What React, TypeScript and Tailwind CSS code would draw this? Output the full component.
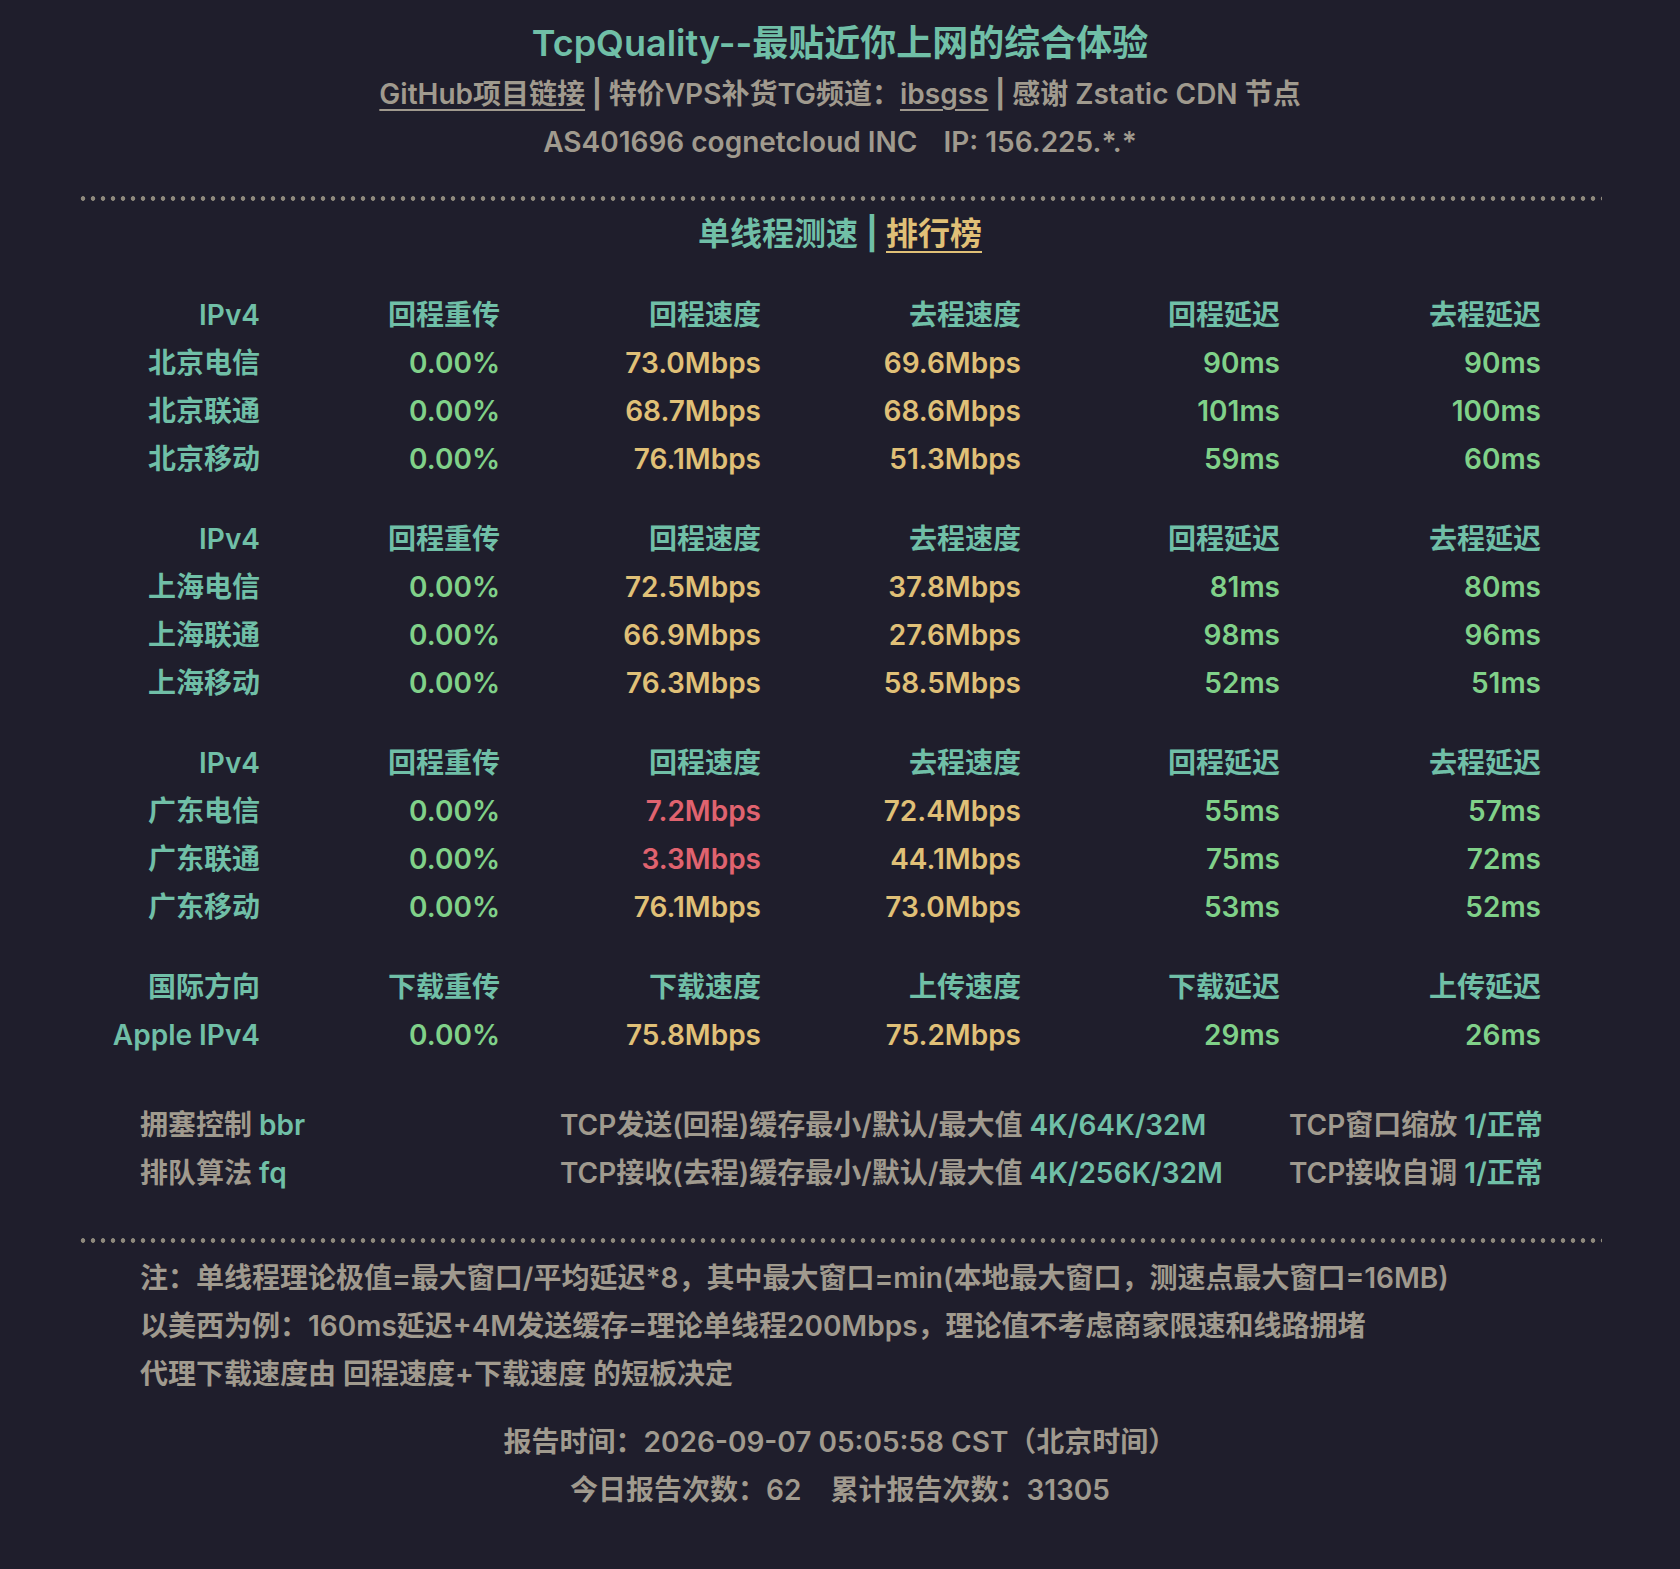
import React from "react";

type Row = {
  name: string;
  retrans: string;
  back: string;
  go: string;
  backRtt: string;
  goRtt: string;
};

type Group = { head: string[]; rows: Row[] };

const groups: Group[] = [
  {
    head: ["IPv4", "回程重传", "回程速度", "去程速度", "回程延迟", "去程延迟"],
    rows: [
      { name: "北京电信", retrans: "0.00%", back: "73.0Mbps", go: "69.6Mbps", backRtt: "90ms", goRtt: "90ms" },
      { name: "北京联通", retrans: "0.00%", back: "68.7Mbps", go: "68.6Mbps", backRtt: "101ms", goRtt: "100ms" },
      { name: "北京移动", retrans: "0.00%", back: "76.1Mbps", go: "51.3Mbps", backRtt: "59ms", goRtt: "60ms" },
    ],
  },
  {
    head: ["IPv4", "回程重传", "回程速度", "去程速度", "回程延迟", "去程延迟"],
    rows: [
      { name: "上海电信", retrans: "0.00%", back: "72.5Mbps", go: "37.8Mbps", backRtt: "81ms", goRtt: "80ms" },
      { name: "上海联通", retrans: "0.00%", back: "66.9Mbps", go: "27.6Mbps", backRtt: "98ms", goRtt: "96ms" },
      { name: "上海移动", retrans: "0.00%", back: "76.3Mbps", go: "58.5Mbps", backRtt: "52ms", goRtt: "51ms" },
    ],
  },
  {
    head: ["IPv4", "回程重传", "回程速度", "去程速度", "回程延迟", "去程延迟"],
    rows: [
      { name: "广东电信", retrans: "0.00%", back: "7.2Mbps", go: "72.4Mbps", backRtt: "55ms", goRtt: "57ms" },
      { name: "广东联通", retrans: "0.00%", back: "3.3Mbps", go: "44.1Mbps", backRtt: "75ms", goRtt: "72ms" },
      { name: "广东移动", retrans: "0.00%", back: "76.1Mbps", go: "73.0Mbps", backRtt: "53ms", goRtt: "52ms" },
    ],
  },
  {
    head: ["国际方向", "下载重传", "下载速度", "上传速度", "下载延迟", "上传延迟"],
    rows: [
      { name: "Apple IPv4", retrans: "0.00%", back: "75.8Mbps", go: "75.2Mbps", backRtt: "29ms", goRtt: "26ms" },
    ],
  },
];

// slow links (< 10Mbps) are shown in red
const speedColor = (v: string) =>
  parseFloat(v) < 10 ? "text-[#e0636f]" : "text-[#e0c077]";

function Dots() {
  return (
    <div className="h-[5px] bg-[radial-gradient(circle,#8d887c_2px,transparent_2.6px)] bg-[length:10px_5px]" />
  );
}

function Cell({ children, className = "" }: { children: React.ReactNode; className?: string }) {
  return <div className={`text-right whitespace-nowrap ${className}`}>{children}</div>;
}

function SpeedTable() {
  return (
    <div className="mt-[33px] ml-[2px] flex flex-col gap-[32px]">
      {groups.map((g, gi) => (
        <div
          key={gi}
          className="grid grid-cols-[180px_240px_261px_260px_259px_261px] leading-[48px]"
        >
          {g.head.map((h) => (
            <Cell key={h} className="text-[#70bfa7]">
              {h}
            </Cell>
          ))}
          {g.rows.map((r) => (
            <React.Fragment key={r.name}>
              <Cell className="text-[#70bfa7]">{r.name}</Cell>
              <Cell className="text-[#80d189]">{r.retrans}</Cell>
              <Cell className={speedColor(r.back)}>{r.back}</Cell>
              <Cell className={speedColor(r.go)}>{r.go}</Cell>
              <Cell className="text-[#80d189]">{r.backRtt}</Cell>
              <Cell className="text-[#80d189]">{r.goRtt}</Cell>
            </React.Fragment>
          ))}
        </div>
      ))}
    </div>
  );
}

export default function App() {
  return (
    <div className="min-h-screen bg-[#1f1e2c] font-['Inter','Noto_Sans_CJK_SC',sans-serif] text-[28px] font-semibold text-[#a09a8e]">
      <div className="mx-auto w-[1524px] pt-[19px]">
        {/* Header */}
        <div className="flex flex-col items-center">
          <h1 className="text-[36px] leading-[48px] font-semibold text-[#70bfa7]">
            TcpQuality--最贴近你上网的综合体验
          </h1>
          <p className="mt-[3px] leading-[48px] whitespace-nowrap">
            <span className="underline decoration-2 underline-offset-[5px]">GitHub项目链接</span>
            <span className="font-bold"> | </span>
            特价VPS补货TG频道：
            <span className="underline decoration-2 underline-offset-[5px]">ibsgss</span>
            <span className="font-bold"> | </span>
            感谢 Zstatic CDN 节点
          </p>
          <p className="leading-[48px] whitespace-nowrap">
            AS401696 cognetcloud INC<span className="ml-[26px]">IP: 156.225.*.*</span>
          </p>
        </div>

        <div className="mt-[30px]">
          <Dots />
        </div>

        <div className="mt-[9px] text-center text-[32px] leading-[48px] text-[#70bfa7]">
          单线程测速 <span className="font-bold">|</span>{" "}
          <span className="text-[#e0c077] underline decoration-2 underline-offset-[6px]">排行榜</span>
        </div>

        <SpeedTable />

        {/* System config */}
        <div className="mt-[42px] grid grid-cols-[420px_729px_auto] pl-[62px] leading-[48px] whitespace-nowrap">
          <div>
            拥塞控制 <span className="text-[#70bfa7]">bbr</span>
          </div>
          <div>
            TCP发送(回程)缓存最小/默认/最大值 <span className="text-[#70bfa7]">4K/64K/32M</span>
          </div>
          <div>
            TCP窗口缩放 <span className="text-[#70bfa7]">1/正常</span>
          </div>
          <div>
            排队算法 <span className="text-[#70bfa7]">fq</span>
          </div>
          <div>
            TCP接收(去程)缓存最小/默认/最大值 <span className="text-[#70bfa7]">4K/256K/32M</span>
          </div>
          <div>
            TCP接收自调 <span className="text-[#70bfa7]">1/正常</span>
          </div>
        </div>

        <div className="mt-[41px]">
          <Dots />
        </div>

        {/* Notes */}
        <div className="mt-[11px] pl-[62px] leading-[48px] whitespace-nowrap">
          <p>注：单线程理论极值=最大窗口/平均延迟*8，其中最大窗口=min(本地最大窗口，测速点最大窗口=16MB)</p>
          <p>以美西为例：160ms延迟+4M发送缓存=理论单线程200Mbps，理论值不考虑商家限速和线路拥堵</p>
          <p>代理下载速度由 回程速度+下载速度 的短板决定</p>
        </div>

        {/* Footer */}
        <div className="mt-[20px] flex flex-col items-center leading-[48px] whitespace-nowrap">
          <p>报告时间：2026-09-07 05:05:58 CST（北京时间）</p>
          <p>
            今日报告次数：62<span className="ml-[29px]">累计报告次数：31305</span>
          </p>
        </div>
      </div>
    </div>
  );
}
